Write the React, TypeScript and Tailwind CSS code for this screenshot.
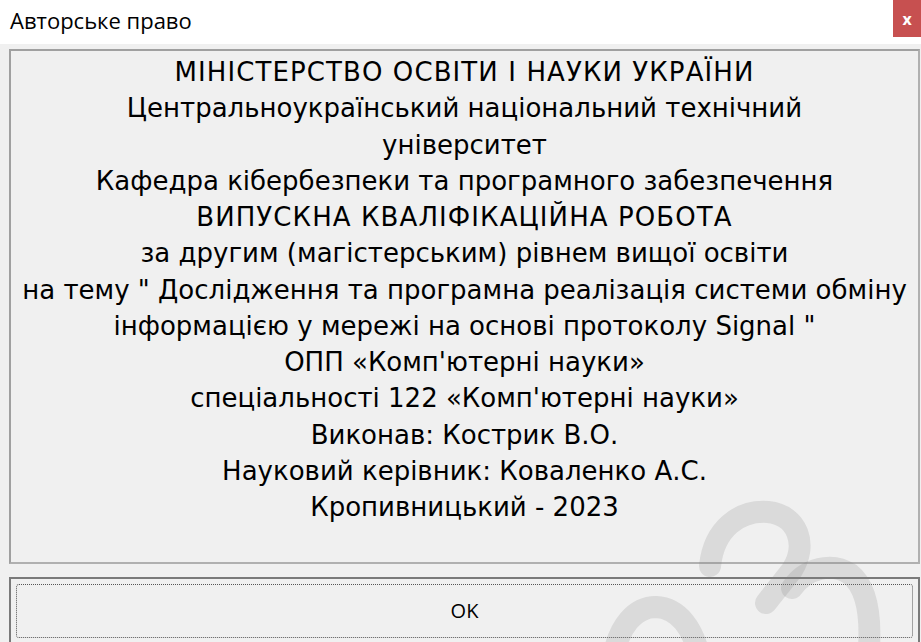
import React from 'react';

type Line = { text: string; caps?: boolean };

const lines: Line[] = [
  { text: 'МІНІСТЕРСТВО ОСВІТИ І НАУКИ УКРАЇНИ', caps: true },
  { text: 'Центральноукраїнський національний технічний' },
  { text: 'університет' },
  { text: 'Кафедра кібербезпеки та програмного забезпечення' },
  { text: 'ВИПУСКНА КВАЛІФІКАЦІЙНА РОБОТА', caps: true },
  { text: 'за другим (магістерським) рівнем вищої освіти' },
  { text: 'на тему " Дослідження та програмна реалізація системи обміну' },
  { text: 'інформацією у мережі на основі протоколу Signal "' },
  { text: 'ОПП «Комп\'ютерні науки»' },
  { text: 'спеціальності 122 «Комп\'ютерні науки»' },
  { text: 'Виконав: Кострик В.О.' },
  { text: 'Науковий керівник: Коваленко А.С.' },
  { text: 'Кропивницький - 2023' },
];

// faint swirl stamped over the lower right corner
const Swirl: React.FC = () => (
  <svg
    className="pointer-events-none absolute inset-0"
    width={921}
    height={642}
    viewBox="0 0 921 642"
    fill="none"
  >
    <g stroke="#808080" strokeOpacity={0.2} strokeWidth={22} strokeLinecap="round">
      <path d="M710 566 C714 528 740 510 768 512 C798 515 808 545 792 570 L766 603" />
      <path d="M792 588 C806 568 832 562 850 574 C868 588 872 620 868 660" />
      <path d="M613 660 C618 625 636 607 656 607 C678 608 694 628 700 660" />
    </g>
  </svg>
);

const App: React.FC = () => {
  return (
    <div className="relative flex h-[642px] w-[921px] flex-col overflow-hidden bg-[#f0f0f0] font-['DejaVu_Sans',sans-serif] text-black">
      {/* Title bar */}
      <div className="flex h-[44px] shrink-0 items-start justify-between bg-white">
        <span className="pl-[10px] pt-[5px] font-['Open_Sans',sans-serif] text-[22px] leading-[30px] text-black">
          Авторське право
        </span>
        <button className="flex h-[37px] w-[28px] items-center justify-center bg-[#c75050] font-['Open_Sans',sans-serif] text-[16px] font-bold leading-none text-white">
          x
        </button>
      </div>

      {/* Client area */}
      <div className="flex flex-1 flex-col pl-[9px] pr-[1px]">
        <div className="mt-[5px] h-[515px] border-2 border-[#a0a0a0] border-b-[#b0b0b0] border-r-[#b0b0b0] pt-[3px] text-center text-[26px] leading-[36.25px]">
          {lines.map((line, i) => (
            <div key={i} className={line.caps ? 'whitespace-nowrap tracking-[1.1px]' : 'whitespace-nowrap'}>
              {line.text}
            </div>
          ))}
        </div>

        <div className="mt-[13px] h-[68px] shrink-0 border-2 border-[#7a7a7a] p-[5px]">
          <div className="flex h-[54px] items-center justify-center rounded-[3px] border border-dotted border-[#555555] font-['Open_Sans',sans-serif] text-[20px]">
            OK
          </div>
        </div>
      </div>

      <Swirl />
    </div>
  );
};

export default App;
